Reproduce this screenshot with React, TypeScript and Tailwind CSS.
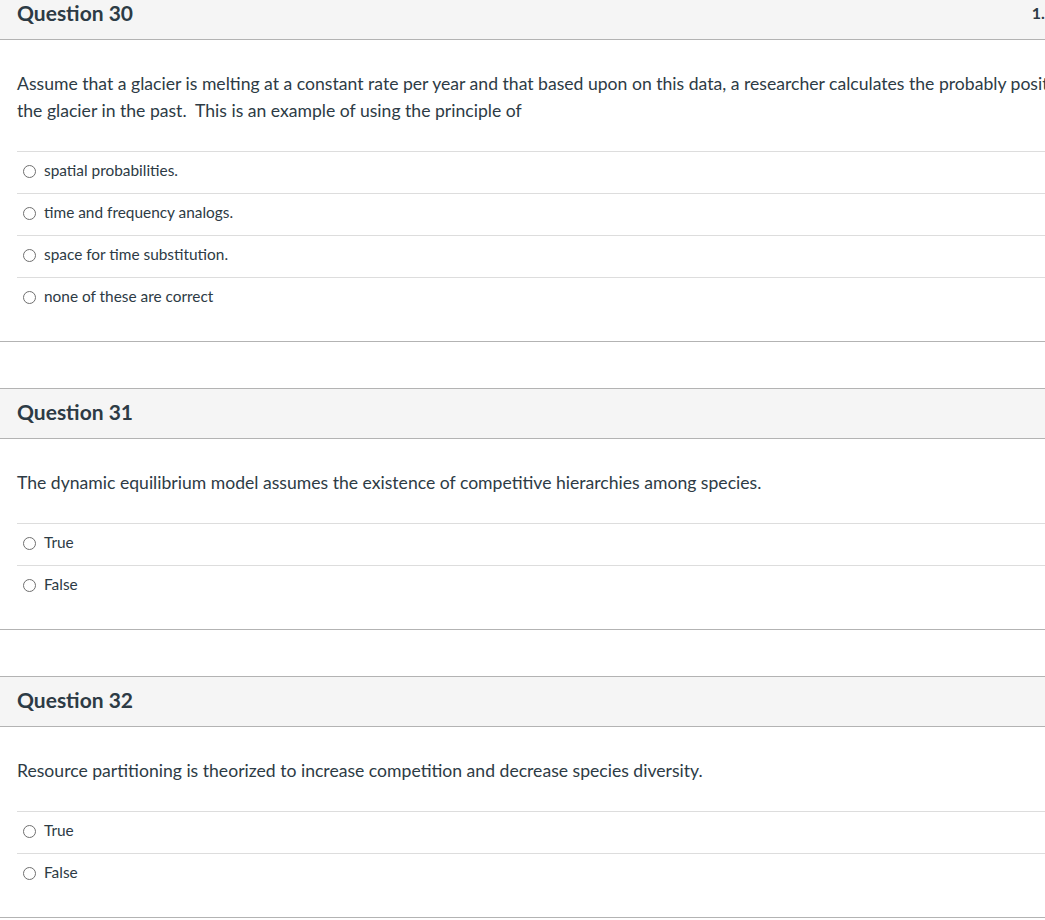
import React from 'react';

type Q = {
  num: number;
  pts: string;
  text: React.ReactNode;
  answers: string[];
};

const questions: Q[] = [
  {
    num: 30,
    pts: '1.5 pts',
    text: (
      <>
        <span className="block whitespace-nowrap">
          Assume that a glacier is melting at a constant rate per year and that based upon on this data, a researcher calculates the probably position of
        </span>
        <span className="block whitespace-nowrap">the glacier in the past.&nbsp; This is an example of using the principle of</span>
      </>
    ),
    answers: ['spatial probabilities.', 'time and frequency analogs.', 'space for time substitution.', 'none of these are correct'],
  },
  {
    num: 31,
    pts: '1 pts',
    text: 'The dynamic equilibrium model assumes the existence of competitive hierarchies among species.',
    answers: ['True', 'False'],
  },
  {
    num: 32,
    pts: '1 pts',
    text: 'Resource partitioning is theorized to increase competition and decrease species diversity.',
    answers: ['True', 'False'],
  },
];

function Radio() {
  return <span className="inline-block w-[13px] h-[13px] rounded-full border border-[#6f6f6f] bg-white shrink-0" />;
}

function QuestionCard({ q, first }: { q: Q; first: boolean }) {
  return (
    <div className={`w-[1100px] border-y border-[#b3b3b3] bg-white ${first ? 'mt-[-11px]' : 'mt-[46px]'}`}>
      <div className="h-[50px] bg-[#f5f5f5] border-b border-[#b3b3b3] flex items-center justify-between px-[17px] pb-[3px]">
        <h2 className="text-[21px] font-bold text-[#2d3b45]">Question {q.num}</h2>
        <span className="text-[16px] font-bold text-[#2d3b45] pr-[3px]">{q.pts}</span>
      </div>
      <div className="px-[17px] pt-[30px] pb-[22px]">
        <div className="text-[17.6px] leading-[27px] text-[#2d3b45] pb-[27px]">{q.text}</div>
        <div>
          {q.answers.map((a) => (
            <div key={a} className="h-[42px] border-t border-[#dddddd] flex items-center gap-[8px] pl-[6px] pb-[3px]">
              <Radio />
              <span className="text-[15.4px] text-[#2d3b45]">{a}</span>
            </div>
          ))}
        </div>
      </div>
    </div>
  );
}

export default function App() {
  return (
    <div className="w-[1045px] h-[920px] overflow-hidden bg-white" style={{ fontFamily: 'Lato, "Noto Sans", sans-serif' }}>
      <div className="w-[1100px]">
        {questions.map((q, i) => (
          <QuestionCard key={q.num} q={q} first={i === 0} />
        ))}
      </div>
    </div>
  );
}
